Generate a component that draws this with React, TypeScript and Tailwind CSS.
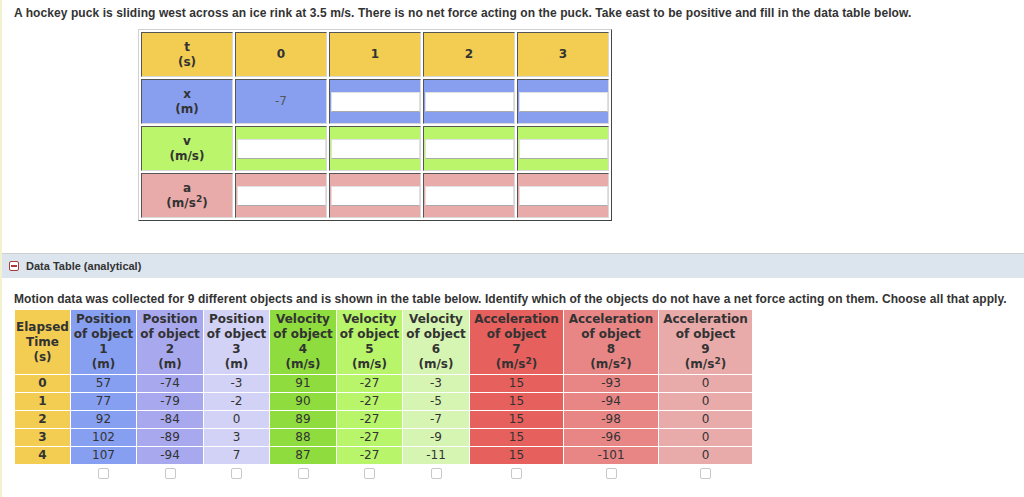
import type { ReactNode } from "react";

const sq = <sup className="text-[9px]">2</sup>;

const topRows = [
	{ label: "x", unit: "(m)", bg: "bg-[#889ff0]", first: "-7" },
	{ label: "v", unit: "(m/s)", bg: "bg-[#bbf56c]", first: null },
	{ label: "a", unit: <>(m/s{sq})</>, bg: "bg-[#e9aaaa]", first: null },
];

type Col = {
	name: string;
	num: number;
	unit: ReactNode;
	bg: string;
	w: string;
	vals: number[];
};

const cols: Col[] = [
	{ name: "Position", num: 1, unit: "(m)", bg: "bg-[#879ff0]", w: "w-[65px]", vals: [57, 77, 92, 102, 107] },
	{ name: "Position", num: 2, unit: "(m)", bg: "bg-[#a8a8ef]", w: "w-[66px]", vals: [-74, -79, -84, -89, -94] },
	{ name: "Position", num: 3, unit: "(m)", bg: "bg-[#d2d2f6]", w: "w-[65px]", vals: [-3, -2, 0, 3, 7] },
	{ name: "Velocity", num: 4, unit: "(m/s)", bg: "bg-[#8fdc3e]", w: "w-[66px]", vals: [91, 90, 89, 88, 87] },
	{ name: "Velocity", num: 5, unit: "(m/s)", bg: "bg-[#b9f56b]", w: "w-[65px]", vals: [-27, -27, -27, -27, -27] },
	{ name: "Velocity", num: 6, unit: "(m/s)", bg: "bg-[#d7f5b2]", w: "w-[66px]", vals: [-3, -5, -7, -9, -11] },
	{ name: "Acceleration", num: 7, unit: <>(m/s{sq})</>, bg: "bg-[#e6605d]", w: "w-[93px]", vals: [15, 15, 15, 15, 15] },
	{ name: "Acceleration", num: 8, unit: <>(m/s{sq})</>, bg: "bg-[#e88686]", w: "w-[94px]", vals: [-93, -94, -98, -96, -101] },
	{ name: "Acceleration", num: 9, unit: <>(m/s{sq})</>, bg: "bg-[#e9aaaa]", w: "w-[93px]", vals: [0, 0, 0, 0, 0] },
];

const insetCell =
	"border border-t-[#555] border-l-[#555] border-r-[#d8d8d8] border-b-[#d8d8d8] w-[92px] h-[45px] p-0 text-center align-middle";

function InputBox() {
	return (
		<div className="mx-auto h-[20px] w-[89px] border border-[#e0e0e0] border-b-[#aaa] bg-white" />
	);
}

export default function App() {
	return (
		<div className="min-h-[497px] border-l-2 border-[#f2f2cf] bg-white font-['Liberation_Sans',Arial,sans-serif] text-[#333]">
			<div className="pl-3 pt-[6px]">
				<p className="text-[12px] font-bold leading-[14px] tracking-[0.08px]">
					A hockey puck is sliding west across an ice rink at 3.5 m/s. There is no net force acting on the puck. Take
					east to be positive and fill in the data table below.
				</p>
				<table className="ml-[124px] mt-[9px] border-separate border-spacing-[2px] border border-t-[#d0d0d0] border-l-[#d0d0d0] border-r-[#444] border-b-[#444] font-['DejaVu_Sans',Verdana,sans-serif] text-[12px] leading-[15px] text-[#333]">
					<tbody>
						<tr>
							<td className={`${insetCell} bg-[#f2cd52] font-bold`}>
								t<br />(s)
							</td>
							{[0, 1, 2, 3].map((n) => (
								<td key={n} className={`${insetCell} bg-[#f2cd52] font-bold`}>
									{n}
								</td>
							))}
						</tr>
						{topRows.map((r) => (
							<tr key={r.label}>
								<td className={`${insetCell} ${r.bg} font-bold`}>
									{r.label}
									<br />
									{r.unit}
								</td>
								{[0, 1, 2, 3].map((n) => (
									<td key={n} className={`${insetCell} ${r.bg}`}>
										{n === 0 && r.first ? <span className="text-[#555]">{r.first}</span> : <InputBox />}
									</td>
								))}
							</tr>
						))}
					</tbody>
				</table>
			</div>

			<div className="mt-[32px] flex h-[25px] items-center gap-[7px] border-t border-[#cfcfcf] bg-[#dce5ee] pl-[7px]">
				<span className="flex h-[10px] w-[10px] items-center justify-center rounded-[2px] border border-[#a83a3a] bg-white">
					<span className="h-[1.5px] w-[6px] bg-[#a83a3a]" />
				</span>
				<span className="text-[11px] font-bold">Data Table (analytical)</span>
			</div>

			<div className="pl-3 pt-[14px]">
				<p className="text-[12px] font-bold leading-[14px] tracking-[0.08px]">
					Motion data was collected for 9 different objects and is shown in the table below. Identify which of the
					objects do not have a net force acting on them. Choose all that apply.
				</p>
				<table className="mt-[3px] border-separate border-spacing-[1px] font-['DejaVu_Sans',Verdana,sans-serif] text-[12px] leading-[15px] text-[#333]">
					<thead>
						<tr>
							<th className="h-[64px] w-[55px] bg-[#f2cd52] p-0 text-center align-middle font-bold">
								Elapsed
								<br />
								Time
								<br />
								(s)
							</th>
							{cols.map((c) => (
								<th key={c.num} className={`${c.bg} ${c.w} h-[64px] p-0 text-center align-middle font-bold`}>
									{c.name}
									<br />
									of object
									<br />
									{c.num}
									<br />
									{c.unit}
								</th>
							))}
						</tr>
					</thead>
					<tbody>
						{[0, 1, 2, 3, 4].map((t) => (
							<tr key={t}>
								<td className="h-[17px] bg-[#f2cd52] p-0 text-center font-bold">{t}</td>
								{cols.map((c) => (
									<td key={c.num} className={`${c.bg} h-[17px] p-0 text-center`}>
										{c.vals[t]}
									</td>
								))}
							</tr>
						))}
						<tr>
							<td className="h-[17px] p-0" />
							{cols.map((c) => (
								<td key={c.num} className="h-[17px] p-0 pt-[3px] align-top">
									<span className="mx-auto block h-[11px] w-[11px] rounded-[2px] border border-[#c8c8c8] bg-white" />
								</td>
							))}
						</tr>
					</tbody>
				</table>
			</div>
		</div>
	);
}
